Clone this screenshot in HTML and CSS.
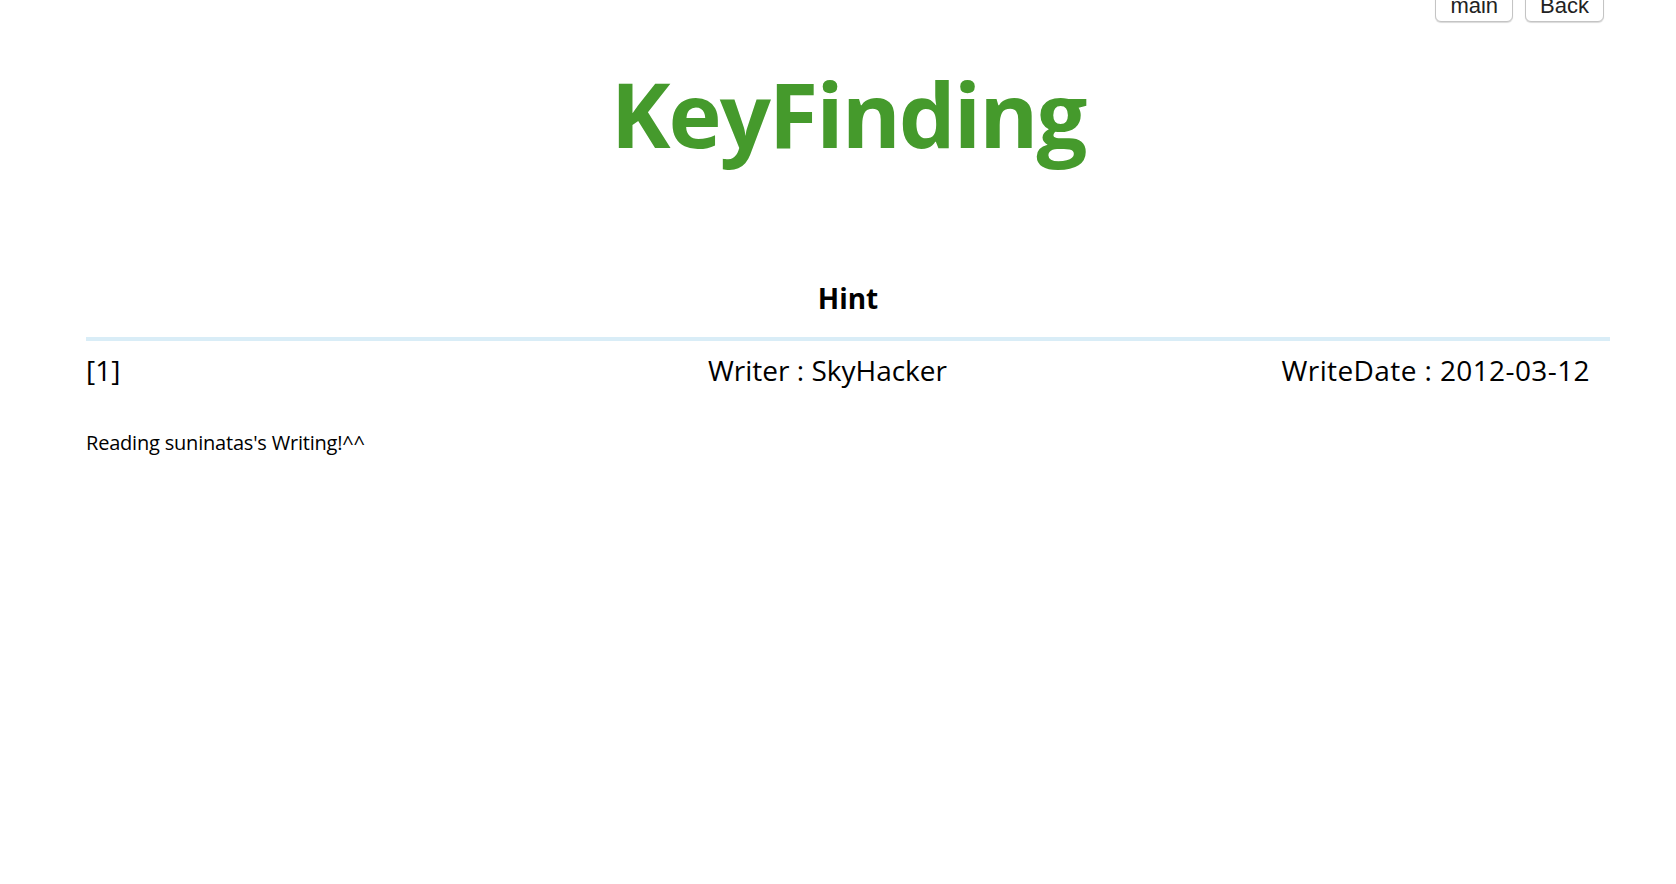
FILE: index.html
```html
<!DOCTYPE html>
<html>
<head>
<meta charset="utf-8">
<link rel="stylesheet" href="styles.css">
</head>
<body>
<div class="topbar">
  <button class="btn">main</button>
  <button class="btn">Back</button>
</div>
<div class="page">
  <h1 class="title">KeyFinding</h1>
  <h2 class="hint">Hint</h2>
  <div class="board">
    <div class="row">
      <span class="num">[1]</span>
      <span class="writer">Writer : SkyHacker</span>
      <span class="date">WriteDate : 2012-03-12</span>
    </div>
    <p class="content">Reading suninatas's Writing!^^</p>
  </div>
</div>
</body>
</html>
```
FILE: styles.css
```css
html, body {
  margin: 0;
  padding: 0;
  background: #fff;
}
body {
  font-family: "Open Sans", "Noto Sans", "Noto Sans CJK KR", sans-serif;
  color: #000;
}
.topbar {
  display: flex;
  justify-content: flex-end;
  gap: 12px;
  padding-right: 72px;
  margin-top: -9px;
}
.btn {
  font-family: "Liberation Sans", Arial, sans-serif;
  font-size: 22px;
  line-height: 26px;
  color: #222;
  background: #fff;
  border: 1px solid #c4c4c4;
  border-radius: 6px;
  padding: 1px 14px 2px;
  box-shadow: 0 1px 1px rgba(0,0,0,0.15);
}
.page {
  padding: 0 66px 0 86px;
}
.title {
  margin: 30px 0 0;
  text-align: center;
  font-size: 90px;
  font-weight: 700;
  letter-spacing: -2px;
  line-height: normal;
  color: #459a2c;
}
.hint {
  margin: 105px 0 0;
  text-align: center;
  font-size: 28px;
  font-weight: 700;
  line-height: normal;
}
.board {
  margin-top: 20px;
  border-top: 4px solid #d9edf7;
}
.row {
  display: grid;
  grid-template-columns: 622px auto 1fr;
  margin-top: 10px;
  padding-right: 20px;
  font-size: 28px;
  line-height: normal;
}
.date {
  text-align: right;
  letter-spacing: 0.4px;
}
.content {
  margin: 40px 0 0;
  font-size: 20px;
  line-height: normal;
  letter-spacing: -0.2px;
}
```
